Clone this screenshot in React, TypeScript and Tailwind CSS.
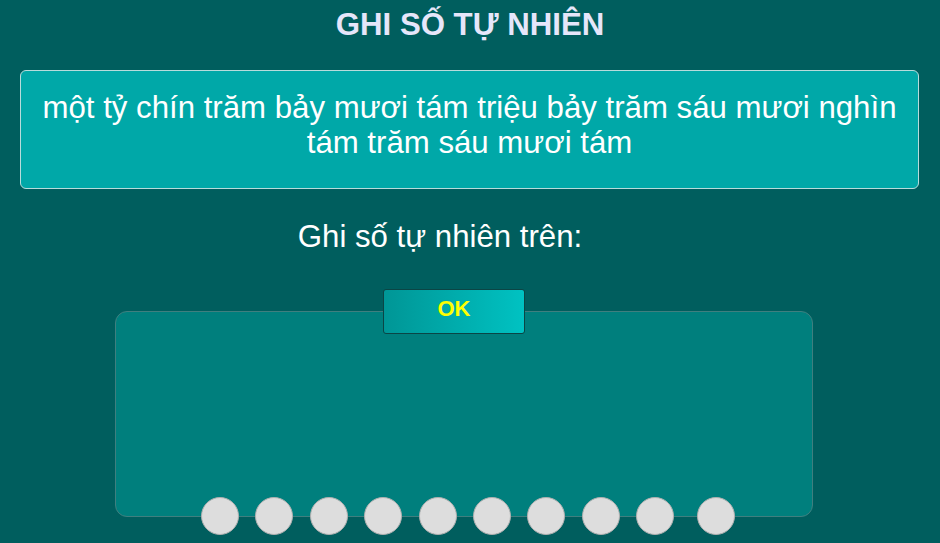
const font = { fontFamily: '"Liberation Sans", Arial, sans-serif' };

export default function App() {
  const slots = Array.from({ length: 10 }, (_, i) => i);

  return (
    <div
      className="min-h-[543px] w-full overflow-hidden bg-[#005e5e] font-['Liberation_Sans',Arial,sans-serif]"
      style={font}
    >
      {/* Tiêu đề */}
      <h1 className="pt-[8px] text-center text-[31.2px] leading-[34px] font-bold text-[#e6e6fa]">
        GHI SỐ TỰ NHIÊN
      </h1>

      {/* Đề bài */}
      <div className="mt-[28px] ml-[20px] w-[899px] rounded-[6px] border border-[#b8dcdc] bg-[#00a8a8] px-4 pt-[19px] pb-[28px] text-center text-[31.2px] leading-[35px] text-white">
        một tỷ chín trăm bảy mươi tám triệu bảy trăm sáu mươi nghìn
        <br />
        tám trăm sáu mươi tám
      </div>

      <p className="mt-[31px] w-[880px] text-center text-[31.2px] leading-[34px] text-white">
        Ghi số tự nhiên trên:
      </p>

      {/* Nút OK */}
      <div className="mt-[35px] ml-[383px] w-[142px]">
        <button className="relative z-10 h-[45px] w-[142px] rounded-[3px] border border-[#0b4545] bg-gradient-to-r from-[#009696] to-[#00c2c2] pb-[6px] text-[22px] font-bold text-[#ffff00]">
          OK
        </button>
      </div>

      {/* Khung trả lời */}
      <div className="-mt-[23px] ml-[115px] h-[206px] w-[698px] rounded-[12px] border border-[#3f7f7f] bg-[#007f7d]" />

      {/* Các ô số */}
      <div className="relative -mt-[20px] ml-[201px] flex gap-[16.4px]">
        {slots.map((i) => (
          <div
            key={i}
            className={
              "h-[38px] w-[38px] rounded-full border border-[#b0b0b0] bg-[#dddddd]" +
              (i === 9 ? " ml-[6px]" : "")
            }
          />
        ))}
      </div>
    </div>
  );
}
